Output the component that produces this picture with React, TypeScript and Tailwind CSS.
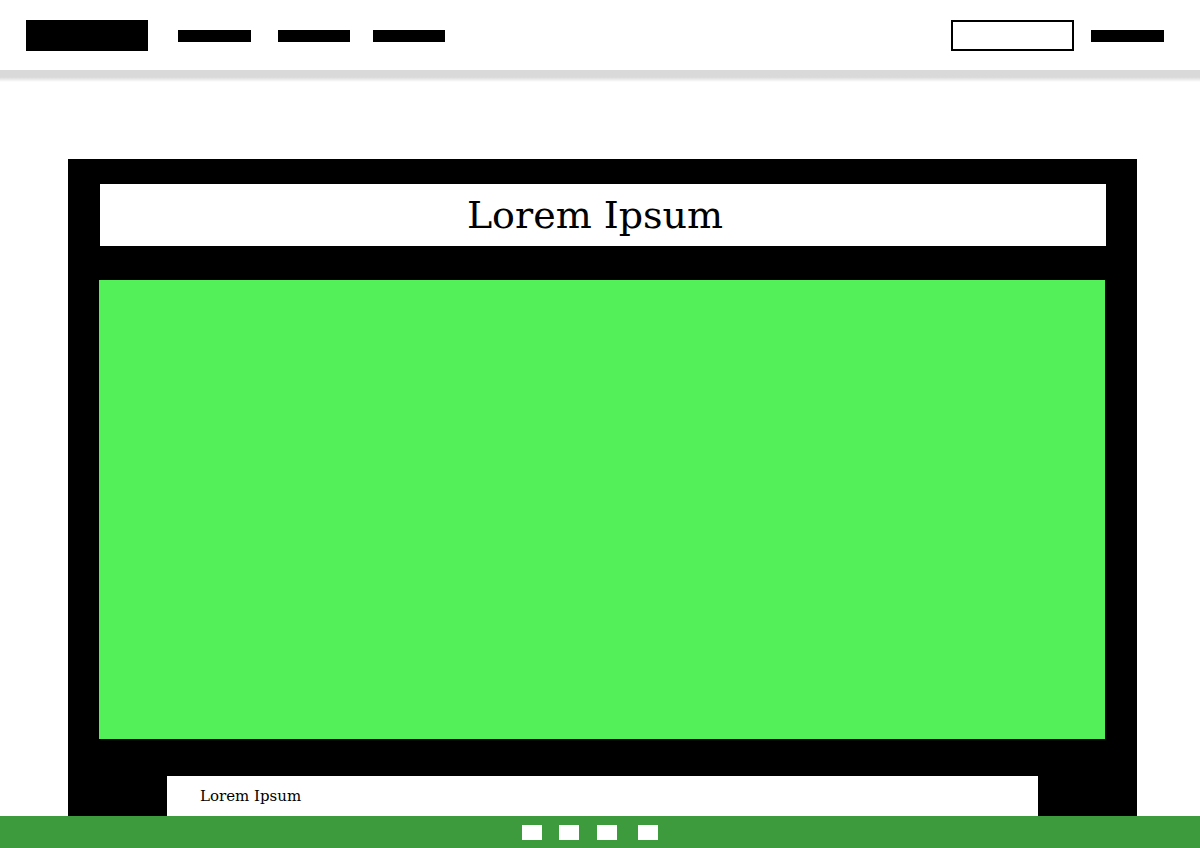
export default function App() {
  return (
    <div className="relative h-[848px] w-[1200px] overflow-hidden bg-white" style={{ fontFamily: '"DejaVu Serif", serif' }}>
      <header className="flex h-[70px] items-center justify-between bg-white pl-[26px] pr-[36px] pt-px">
        <div className="flex items-center">
          <div className="h-[31px] w-[122px] bg-black" />
          <div className="ml-[30px] h-[12px] w-[73px] bg-black" />
          <div className="ml-[27px] h-[12px] w-[72px] bg-black" />
          <div className="ml-[23px] h-[12px] w-[72px] bg-black" />
        </div>
        <div className="flex items-center">
          <div className="h-[31px] w-[123px] border-2 border-black bg-white" />
          <div className="ml-[17px] h-[12px] w-[73px] bg-black" />
        </div>
      </header>
      <div className="h-[12px] bg-linear-to-b from-[#d9d9d9] from-60% to-white" />
      <main className="pl-[68px] pr-[63px] pt-[77px]">
        <div className="flex flex-col bg-black pb-[40px] pl-[32px] pr-[31px] pt-[25px]">
          <div className="flex h-[62px] items-center justify-center bg-white pr-[16px]">
            <span className="text-[38px] leading-none text-black">Lorem Ipsum</span>
          </div>
          <div className="ml-[-1px] mr-px mt-[34px] h-[459px] bg-[#53f05a]" />
          <div className="ml-[67px] mr-[68px] mt-[37px] flex h-[60px] items-start bg-white pl-[33px] pt-[13px]">
            <span className="text-[15px] leading-none text-black">Lorem Ipsum</span>
          </div>
        </div>
      </main>
      <footer className="absolute bottom-0 left-0 flex h-[32px] w-full items-center justify-center gap-[17px] bg-[#3d9a3d] pr-[20px]">
        <div className="h-[15px] w-[20px] bg-white" />
        <div className="h-[15px] w-[20px] bg-white" />
        <div className="ml-px h-[15px] w-[20px] bg-white" />
        <div className="ml-[4px] h-[15px] w-[20px] bg-white" />
      </footer>
    </div>
  );
}
